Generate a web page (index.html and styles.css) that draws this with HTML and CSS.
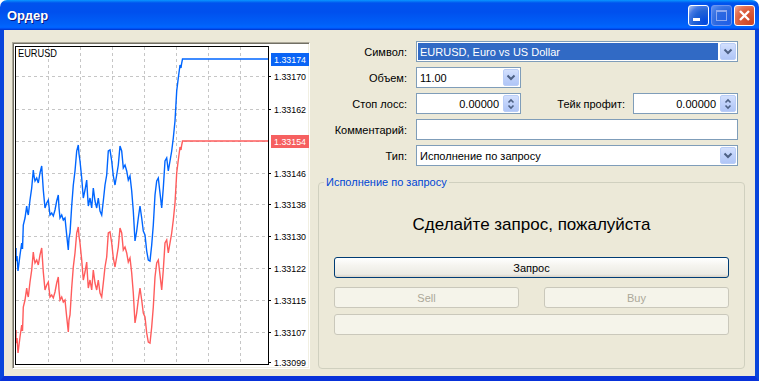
FILE: index.html
```html
<!DOCTYPE html>
<html lang="ru">
<head>
  <meta charset="UTF-8">
  <title>Ордер</title>
  <link rel="stylesheet" href="styles.css">
</head>
<body>
  <div class="window">
    <div class="titlebar">
      <span class="title">Ордер</span>
      <div class="caption">
        <span class="cap cap-min"><svg width="19" height="19"><rect x="4" y="12" width="7" height="3" fill="#fff"/></svg></span>
        <span class="cap cap-max"><svg width="19" height="19"><rect x="4.5" y="4.5" width="10" height="10" fill="none" stroke="#8eaaf0"/><rect x="4" y="4" width="11" height="2" fill="#8eaaf0"/></svg></span>
        <span class="cap cap-close"><svg width="19" height="19"><path d="M5 5l9 9M14 5l-9 9" stroke="#fff" stroke-width="2.4"/></svg></span>
      </div>
    </div>

    <div class="client">
      <div class="chart-panel">
        <svg class="chart" width="296" height="325" viewBox="13 43 296 325">
          <defs>
            <polyline id="ticks" fill="none" points="16,330 16,343 17,338 18,353 19,345 20,337 21.7,325 22.5,331 23.3,307 25,300 26.7,288 27.5,294 28.3,297 30,282 31.7,270 33.3,252 34,258 35,263 36.7,260 38.3,265 40,255 41.7,248 42.5,260 43.3,272 45,290 46.7,285 48.3,282 50,297 51.7,295 53.3,298 55,292 56.7,283 58.3,277 59,290 60,300 61.7,297 63.3,302 65,300 66.7,317 68.3,332 69,320 70,315 71.7,288 73.3,267 75,253 76.7,233 78.3,227 79,236 80,243 81.7,260 83.3,280 85,272 86.7,262 87.5,276 88.3,288 90,280 91.7,290 93.3,270 95,283 96.7,290 98.3,280 100,293 101.7,297 103.3,283 105,267 106.7,257 108.3,233 110,232 111.7,243 113.3,258 115,267 116.7,257 118.3,247 120,228 121.7,233 123.3,250 125,247 126.7,253 128.3,262 130,258 131.7,273 133.3,293 135,323 136.7,313 138.3,300 140,288 141.7,300 143.3,313 145,317 146.7,333 148.3,342 150,343 151.7,327 153.3,307 155,277 156.7,263 158.3,260 160,275 161.7,290 163.3,270 165,243 166.7,240 168.3,253 170,243 171.7,233 173.3,220 175,203 176.7,173 178.3,160 180,147 181,150 181.7,145 182.5,141 268,141"/>
          </defs>

          <path class="grid" d="M16 76.5H267M16 109.5H267M16 141.5H267M16 173.5H267M16 204.5H267M16 236.5H267M16 268.5H267M16 300.5H267M16 332.5H267M48.5 47V364M80.5 47V364M112.5 47V364M144.5 47V364M176.5 47V364M208.5 47V364M240.5 47V364"/>

          <use href="#ticks" class="bid"/>
          <use href="#ticks" class="ask" transform="translate(0 -82)"/>

          <path class="axis" d="M15.5 46.5H268.5V364.5H15.5Z"/>
          <path class="axis" d="M268 76.5h3M268 109.5h3M268 173.5h3M268 204.5h3M268 236.5h3M268 268.5h3M268 300.5h3M268 332.5h3M268 362.5h3"/>

          <text class="sym" x="18" y="57" textLength="39" lengthAdjust="spacingAndGlyphs">EURUSD</text>

          <rect x="271" y="53" width="38" height="13" fill="#0a64f5"/>
          <rect x="271" y="135" width="38" height="13" fill="#f66060"/>

          <text class="px on" x="274" y="63" textLength="32" lengthAdjust="spacingAndGlyphs">1.33174</text>
          <text class="px" x="274" y="80" textLength="32" lengthAdjust="spacingAndGlyphs">1.33170</text>
          <text class="px" x="274" y="113" textLength="32" lengthAdjust="spacingAndGlyphs">1.33162</text>
          <text class="px on" x="274" y="145" textLength="32" lengthAdjust="spacingAndGlyphs">1.33154</text>
          <text class="px" x="274" y="177" textLength="32" lengthAdjust="spacingAndGlyphs">1.33146</text>
          <text class="px" x="274" y="208" textLength="32" lengthAdjust="spacingAndGlyphs">1.33138</text>
          <text class="px" x="274" y="240" textLength="32" lengthAdjust="spacingAndGlyphs">1.33130</text>
          <text class="px" x="274" y="272" textLength="32" lengthAdjust="spacingAndGlyphs">1.33122</text>
          <text class="px" x="274" y="304" textLength="32" lengthAdjust="spacingAndGlyphs">1.33115</text>
          <text class="px" x="274" y="336" textLength="32" lengthAdjust="spacingAndGlyphs">1.33107</text>
          <text class="px" x="274" y="366" textLength="32" lengthAdjust="spacingAndGlyphs">1.33099</text>
        </svg>
      </div>

      <div class="order">
        <div class="fields">
          <label>Символ:</label>
          <div class="combo">
            <span class="combo-text selected">EURUSD, Euro vs US Dollar</span>
            <span class="drop"><svg width="14" height="15"><path d="M3.5 5.5l3.5 3.5 3.5-3.5" fill="none" stroke="#4d6185" stroke-width="2"/></svg></span>
          </div>

          <label>Объем:</label>
          <div class="combo combo-short">
            <span class="combo-text">11.00</span>
            <span class="drop"><svg width="14" height="15"><path d="M3.5 5.5l3.5 3.5 3.5-3.5" fill="none" stroke="#4d6185" stroke-width="2"/></svg></span>
          </div>

          <label>Стоп лосс:</label>
          <div class="pair">
            <div class="spin">
              <span class="spin-text">0.00000</span>
              <span class="spin-btn"><svg width="14" height="16"><path d="M4.5 6.5l2.5-2.5 2.5 2.5M4.5 9.5l2.5 2.5 2.5-2.5" fill="none" stroke="#4d6185" stroke-width="1.6"/></svg></span>
            </div>
            <div class="pair-right">
              <label>Тейк профит:</label>
              <div class="spin">
                <span class="spin-text">0.00000</span>
                <span class="spin-btn"><svg width="14" height="16"><path d="M4.5 6.5l2.5-2.5 2.5 2.5M4.5 9.5l2.5 2.5 2.5-2.5" fill="none" stroke="#4d6185" stroke-width="1.6"/></svg></span>
              </div>
            </div>
          </div>

          <label>Комментарий:</label>
          <div class="edit"></div>

          <label>Тип:</label>
          <div class="combo">
            <span class="combo-text">Исполнение по запросу</span>
            <span class="drop"><svg width="14" height="15"><path d="M3.5 5.5l3.5 3.5 3.5-3.5" fill="none" stroke="#4d6185" stroke-width="2"/></svg></span>
          </div>
        </div>

        <fieldset class="group">
          <legend>Исполнение по запросу</legend>
          <h2 class="prompt">Сделайте запрос, пожалуйста</h2>
          <button class="btn btn-default">Запрос</button>
          <div class="trade-row">
            <button class="btn" disabled>Sell</button>
            <button class="btn" disabled>Buy</button>
          </div>
          <button class="btn btn-status" disabled></button>
        </fieldset>
      </div>
    </div>
  </div>
</body>
</html>
```

FILE: styles.css
```css
* {
  box-sizing: border-box;
}
body {
  margin: 0;
  background-color: #fff;
  font-family: "Liberation Sans", Arial, sans-serif;
  font-size: 11px;
  color: #000;
}
.window {
  width: 759px;
  height: 381px;
  display: flex;
  flex-direction: column;
}

/* title bar */
.titlebar {
  flex: none;
  height: 30px;
  display: flex;
  align-items: center;
  justify-content: space-between;
  padding: 0 4px 0 7px;
  border-radius: 7px 7px 0 0;
  background: linear-gradient(180deg, #0997ff, #0053ee 10%, #0050ee 40%, #0060f8 80%, #0066ff 90%, #005bff 94%, #003dd7 97%, #003dd7);
}
.title {
  color: #fff;
  font-weight: bold;
  font-size: 13px;
  text-shadow: 1px 1px #0a1883;
}
.caption {
  display: flex;
  gap: 2px;
  margin-top: 1px;
}
.cap {
  width: 21px;
  height: 21px;
  border: 1px solid #fff;
  border-radius: 3px;
  display: flex;
}
.cap-min {
  background: radial-gradient(circle at 85% 85%, #0048e0 0%, #2263d5 50%, #4479e4 72%, #a3bbec 95%);
}
.cap-max {
  border-color: #6d94f0;
  background: radial-gradient(circle at 85% 85%, #1f5fe8 0%, #2d69e0 55%, #3f78e6 75%, #5d8ef0 95%);
}
.cap-close {
  background: radial-gradient(circle at 85% 85%, #cc4625 0%, #dc5e3d 55%, #e5775a 75%, #f2a58f 95%);
}

/* client area */
.client {
  flex: 1;
  display: flex;
  gap: 8px;
  padding: 11px 10px 7px 8px;
  background-color: #ece9d8;
  border-style: solid;
  border-color: #0845dc;
  border-width: 0 4px 5px 4px;
  border-bottom-color: #0831d9;
}

/* chart */
.chart-panel {
  width: 298px;
  margin-top: 1px;
  background-color: #fff;
  border: 1px solid;
  border-color: #aca899 #fff #fff #aca899;
  box-shadow: inset 1px 1px #716f64, inset -1px -1px #f1efe2;
  display: flex;
}
.chart {
  display: block;
}
.grid {
  stroke: #c6c6c6;
  stroke-dasharray: 3 3;
  shape-rendering: crispEdges;
}
.axis {
  fill: none;
  stroke: #000;
  shape-rendering: crispEdges;
}
.bid {
  stroke: #ff5c5c;
  stroke-width: 1.4;
}
.ask {
  stroke: #0066ff;
  stroke-width: 1.4;
}
.sym {
  font-family: "Liberation Sans", Arial, sans-serif;
  font-size: 11px;
  fill: #000;
}
.px {
  font-family: "Liberation Sans", Arial, sans-serif;
  font-size: 9.5px;
  fill: #000;
}
.px.on {
  fill: #fff;
}

/* order form */
.order {
  flex: 1;
  display: flex;
  flex-direction: column;
}
.fields {
  display: grid;
  grid-template-columns: 89px 1fr;
  grid-auto-rows: 21px;
  gap: 5px 9px;
  margin-right: 7px;
}
.fields label {
  display: flex;
  align-items: center;
  justify-content: flex-end;
  white-space: nowrap;
}
.combo,
.spin {
  display: flex;
  border: 1px solid #7f9db9;
  background-color: #fff;
  padding: 1px;
}
.combo-text {
  flex: 1;
  display: flex;
  align-items: center;
  padding-left: 2px;
}
.combo-text.selected {
  background-color: #316ac5;
  color: #fff;
  margin-right: 2px;
}
.combo-short {
  width: 105px;
}
.drop,
.spin-btn {
  width: 16px;
  display: flex;
  align-items: center;
  justify-content: center;
  border: 1px solid #b9cdf7;
  border-radius: 2px;
  background: linear-gradient(#d3e0fd, #bfd1fa 50%, #b0c6f6);
}
.spin {
  width: 105px;
}
.spin-text {
  flex: 1;
  display: flex;
  align-items: center;
  justify-content: flex-end;
  padding-right: 4px;
}
.pair {
  display: flex;
  justify-content: space-between;
}
.pair-right {
  display: flex;
  gap: 8px;
}
.edit {
  border: 1px solid #7f9db9;
  background-color: #fff;
}

/* request group */
.group {
  flex: 1;
  min-width: 0;
  margin: 10px 0 0;
  padding: 0 15px;
  border: 1px solid #d0d0bf;
  border-radius: 4px;
  display: flex;
  flex-direction: column;
}
.group legend {
  margin-left: -10px;
  padding: 0 2px;
  color: #0046d5;
  line-height: 13px;
}
.prompt {
  margin: 26px 0 22px;
  font-size: 17px;
  font-weight: normal;
  line-height: 20px;
  text-align: center;
}
.btn {
  height: 21px;
  padding: 0;
  font: inherit;
  color: #000;
  border: 1px solid #003c74;
  border-radius: 3px;
  background: linear-gradient(#fff, #f5f4ef 40%, #ecebe4 85%, #d8d2c6);
}
.btn:disabled {
  color: #aca899;
  border-color: #cac8bb;
  background: #f5f4ea;
}
.trade-row {
  display: grid;
  grid-template-columns: 1fr 1fr;
  gap: 25px;
  margin-top: 9px;
}
.btn-status {
  margin-top: 6px;
}
```
